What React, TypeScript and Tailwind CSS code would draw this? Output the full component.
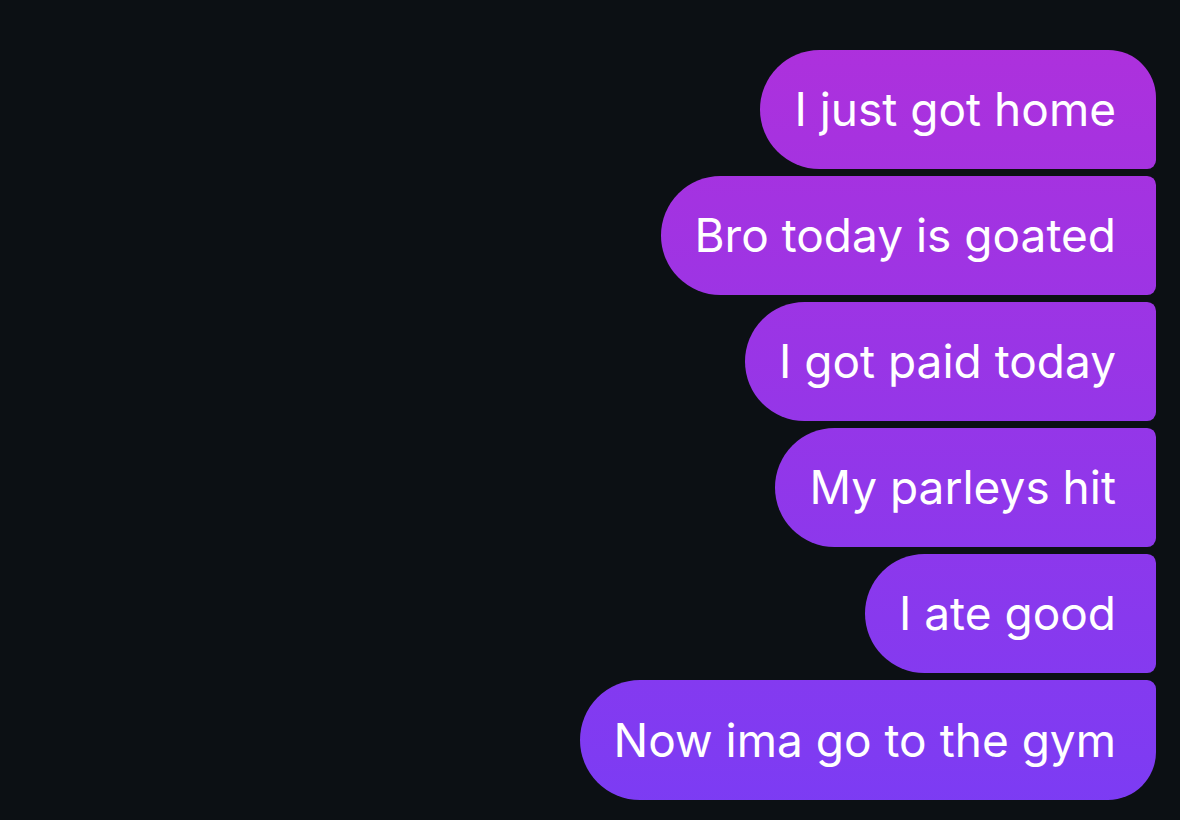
import React from "react";

const msgs = [
  "I just got home",
  "Bro today is goated",
  "I got paid today",
  "My parleys hit",
  "I ate good",
  "Now ima go to the gym",
];

export default function App() {
  return (
    <div className="w-[1180px] h-[820px] bg-[#0c1014] overflow-hidden flex flex-col items-end pt-[50px] pr-[24px] gap-[7px]" style={{ fontFamily: "Inter, 'Noto Sans', sans-serif" }}>
      {msgs.map((m, i) => {
        const first = i === 0;
        const last = i === msgs.length - 1;
        const cls = first
          ? "rounded-l-[60px] rounded-tr-[48px] rounded-br-[9px]"
          : last
          ? "rounded-l-[60px] rounded-tr-[9px] rounded-br-[48px] h-[120px]"
          : "rounded-l-[60px] rounded-r-[9px]";
        return (
          <div
            key={i}
            className={`h-[119px] flex items-center pl-[34px] pr-[40px] text-white text-[46px] tracking-[0px] bg-fixed bg-[linear-gradient(180deg,#b030db_0px,#7b3cf4_820px)] ${cls}`}
          >
            {m}
          </div>
        );
      })}
    </div>
  );
}
